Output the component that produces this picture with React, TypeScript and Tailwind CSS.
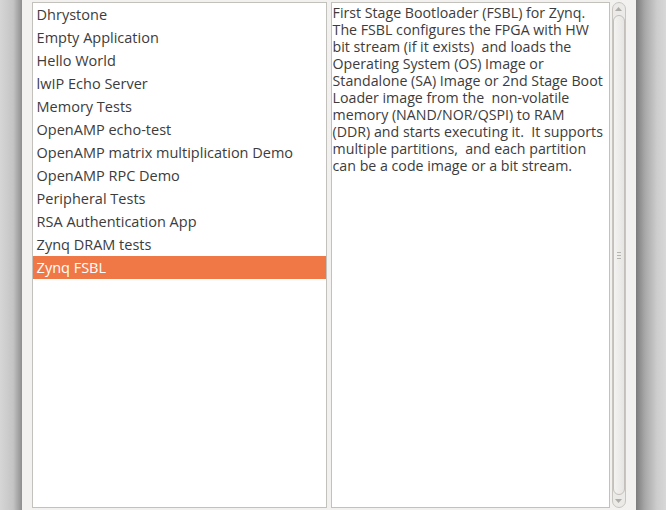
const templates = [
  "Dhrystone",
  "Empty Application",
  "Hello World",
  "lwIP Echo Server",
  "Memory Tests",
  "OpenAMP echo-test",
  "OpenAMP matrix multiplication Demo",
  "OpenAMP RPC Demo",
  "Peripheral Tests",
  "RSA Authentication App",
  "Zynq DRAM tests",
  "Zynq FSBL",
];

const description = [
  "First Stage Bootloader (FSBL) for Zynq.",
  "The FSBL configures the FPGA with HW",
  "bit stream (if it exists)  and loads the",
  "Operating System (OS) Image or",
  "Standalone (SA) Image or 2nd Stage Boot",
  "Loader image from the  non-volatile",
  "memory (NAND/NOR/QSPI) to RAM",
  "(DDR) and starts executing it.  It supports",
  "multiple partitions,  and each partition",
  "can be a code image or a bit stream.",
];

const selected = "Zynq FSBL";

function Scrollbar() {
  return (
    <div className="flex w-[14px] flex-col items-center rounded-full border border-[#c8c5c0] bg-[#ebeae8]">
      <div className="flex h-[12px] w-full items-center justify-center">
        <svg width="7" height="4" viewBox="0 0 7 4">
          <path d="M0 4 L3.5 0 L7 4 Z" fill="#b0ada8" />
        </svg>
      </div>
      <div className="flex w-[12px] flex-1 flex-col items-center justify-center gap-[2px] rounded-full border border-[#c3c0bb] bg-[linear-gradient(to_right,#f4f3f2,#e6e5e3)]">
        <div className="h-px w-[4px] bg-[#b8b5b0]" />
        <div className="h-px w-[4px] bg-[#b8b5b0]" />
        <div className="h-px w-[4px] bg-[#b8b5b0]" />
      </div>
      <div className="flex h-[12px] w-full items-center justify-center">
        <svg width="7" height="4" viewBox="0 0 7 4">
          <path d="M0 0 L3.5 4 L7 0 Z" fill="#b0ada8" />
        </svg>
      </div>
    </div>
  );
}

export default function App() {
  return (
    <div
      className="flex h-[510px] w-[666px] overflow-hidden bg-[#f2f1f0]"
      style={{ fontFamily: '"Open Sans", "DejaVu Sans", sans-serif' }}
    >
      {/* left window shadow */}
      <div className="w-[22px] bg-[linear-gradient(to_right,#d6d6d6,#c4c4c4_60%,#8e8e8e)]" />

      <div className="flex flex-1 px-[10px] pt-[2px] pb-[2px]">
        {/* template list */}
        <div className="flex w-[295px] flex-col border border-[#c3c1bc] bg-white">
          {templates.map((t) => (
            <div
              key={t}
              className={
                t === selected
                  ? "flex h-[23px] items-center bg-[#f07746] px-[4px] text-[14.5px] text-white"
                  : "flex h-[23px] items-center px-[4px] text-[14.5px] text-[#3c3c3c]"
              }
            >
              {t}
            </div>
          ))}
        </div>

        {/* description */}
        <div className="ml-[4px] flex w-[279px] flex-col border border-[#c3c1bc] bg-white px-[1px] pt-[1px]">
          {description.map((line, i) => (
            <div key={i} className="h-[17px] whitespace-pre text-[14.2px] leading-[17px] text-[#3c3c3c]">
              {line}
            </div>
          ))}
        </div>

        <div className="ml-[2px] flex">
          <Scrollbar />
        </div>
      </div>

      {/* right window shadow */}
      <div className="w-[31px] bg-[linear-gradient(to_right,#7c7c7c,#a8a8a8_30%,#cdcdcd_70%,#d8d8d8)]" />
    </div>
  );
}
